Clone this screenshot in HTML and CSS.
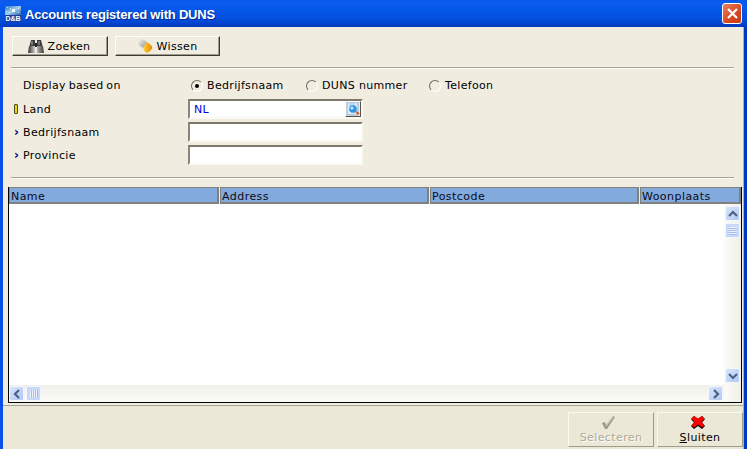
FILE: index.html
```html
<!DOCTYPE html>
<html lang="nl">
<head>
<meta charset="utf-8">
<title>Accounts registered with DUNS</title>
<link rel="stylesheet" href="styles.css">
</head>
<body>
<div class="window">
  <header class="titlebar">
    <svg class="app-icon" width="16" height="16" viewBox="0 0 16 16">
      <defs><linearGradient id="icoTop" x1="0" y1="0" x2="1" y2="1"><stop offset="0" stop-color="#2f6fc0"/><stop offset=".5" stop-color="#9fd0ee"/><stop offset="1" stop-color="#2e62b0"/></linearGradient></defs>
      <rect width="16" height="16" fill="#1c3f94"/>
      <rect width="16" height="9" fill="url(#icoTop)"/>
      <path d="M2 1h1v1H2zM5 2h1v1H5zM1 5h1v1H1zM4 6h1v1H4zM13 2h1v1h-1zM13 6h1v1h-1z" fill="#d8eefb"/>
      <rect x="7" y="3" width="3" height="3" fill="#eefaff"/>
      <text x="8" y="15" class="app-icon-text" text-anchor="middle">D&amp;B</text>
    </svg>
    <h1 class="title">Accounts registered with DUNS</h1>
    <button class="close" aria-label="Sluiten">
      <svg width="13" height="13" viewBox="0 0 13 13"><path d="M2 2l9 9M11 2l-9 9" stroke="#fff" stroke-width="2.2" fill="none"/></svg>
    </button>
  </header>
  <main class="client">
    <div class="toolbar">
      <button class="tool tool-zoek">
        <svg width="16" height="13" viewBox="0 0 16 13">
          <defs><linearGradient id="bino" x1="0" x2="1" y1="0" y2="0"><stop offset="0" stop-color="#2e2e2e"/><stop offset=".45" stop-color="#d4d4d4"/><stop offset="1" stop-color="#3a3a3a"/></linearGradient></defs>
          <path d="M3 0h4v5l-0 3H1l1-4zM9 0h4l1 4 1 4H9V5z" fill="#3c3c3c"/>
          <rect x="7" y="3" width="2" height="4" fill="#222"/>
          <path d="M1 6h6v7H0zM9 6h6l1 7H9z" fill="url(#bino)"/>
          <path d="M4 1v4M11 1v4" stroke="#a8a8a8"/>
        </svg>
        <span>Zoeken</span>
      </button>
      <button class="tool tool-wis">
        <svg width="15" height="14" viewBox="0 0 15 14">
          <defs>
            <linearGradient id="pillG" x1="0" y1="0" x2="1" y2="1"><stop offset="0" stop-color="#f4f4f4"/><stop offset="1" stop-color="#8e8e8e"/></linearGradient>
            <linearGradient id="pillO" x1="0" y1="0" x2="1" y2="0"><stop offset="0" stop-color="#ffd23a"/><stop offset="1" stop-color="#e88a08"/></linearGradient>
          </defs>
          <path d="M1 2a3.6 3.6 0 0 1 5-1l3 2-4 6-3-2a3.6 3.6 0 0 1-1-5z" fill="url(#pillG)"/>
          <path d="M9 3l4 3a3.6 3.6 0 0 1 0 5l-1 1a3.6 3.6 0 0 1-5 1L5 9z" fill="url(#pillO)"/>
        </svg>
        <span>Wissen</span>
      </button>
    </div>
    <hr class="rule rule-top">
    <form class="form">
      <div class="display-row">
        <span class="label label-display">Display based on</span>
        <div class="radios">
          <label class="radio radio-a"><i class="dot on"></i>Bedrijfsnaam</label>
          <label class="radio radio-b"><i class="dot"></i>DUNS nummer</label>
          <label class="radio radio-c"><i class="dot"></i>Telefoon</label>
        </div>
      </div>
      <div class="field-row">
        <span class="marker"><i class="req"></i></span>
        <span class="label">Land</span>
        <div class="input"><span class="value">NL</span>
          <span class="lookup">
            <svg width="14" height="14" viewBox="0 0 14 14">
              <rect x="1" y="0" width="11" height="13" fill="#dcebf8" stroke="#8fb0d2"/>
              <path d="M3 2h6M3 4h3" stroke="#9cc0e0"/>
              <circle cx="7" cy="7" r="3.800" fill="#2a96ec"/>
              <circle cx="6" cy="6" r="1.600" fill="#c4e8ff"/>
              <path d="M10 10l3 2" stroke="#d9541a" stroke-width="2"/>
            </svg>
          </span>
        </div>
      </div>
      <div class="field-row">
        <span class="marker"><i class="chev">›</i></span>
        <span class="label">Bedrijfsnaam</span>
        <div class="input"></div>
      </div>
      <div class="field-row">
        <span class="marker"><i class="chev">›</i></span>
        <span class="label">Provincie</span>
        <div class="input"></div>
      </div>
    </form>
    <hr class="rule rule-mid">
    <section class="grid">
      <div class="grid-head">
        <div class="col col-name">Name</div>
        <div class="col col-addr">Address</div>
        <div class="col col-post">Postcode</div>
        <div class="col col-city">Woonplaats</div>
      </div>
      <div class="grid-body">
        <div class="grid-main">
          <div class="cells"></div>
          <div class="hbar">
            <span class="sb sb-btn"><svg width="10" height="10" viewBox="0 0 10 10"><path d="M7 1L3 5l4 4" stroke="#4d6185" stroke-width="2.2" fill="none"/></svg></span>
            <span class="sb sb-thumb-h"></span>
            <span class="sb-spacer"></span>
            <span class="sb sb-btn"><svg width="10" height="10" viewBox="0 0 10 10"><path d="M3 1l4 4-4 4" stroke="#4d6185" stroke-width="2.2" fill="none"/></svg></span>
          </div>
        </div>
        <div class="vbar">
          <span class="sb sb-btn"><svg width="10" height="10" viewBox="0 0 10 10"><path d="M1 7l4-4 4 4" stroke="#4d6185" stroke-width="2.2" fill="none"/></svg></span>
          <span class="sb sb-thumb-v"></span>
          <span class="sb-spacer"></span>
          <span class="sb sb-btn"><svg width="10" height="10" viewBox="0 0 10 10"><path d="M1 3l4 4 4-4" stroke="#4d6185" stroke-width="2.2" fill="none"/></svg></span>
        </div>
      </div>
    </section>
    <footer class="footer">
      <button class="action" disabled>
        <svg width="13" height="13" viewBox="0 0 13 13"><path d="M0 7l3-1 1 3 7-9 2 1-8 12H3z" fill="#9c9a8e"/><path d="M4 10l7-9" stroke="#dedbcf"/></svg>
        <span>Selecteren</span>
      </button>
      <button class="action">
        <svg width="14" height="13" viewBox="0 0 14 13"><path d="M3 0l4 3 4-3 3 3-3 3.500 3 3.500-3 3-4-3-4 3-3-3 3-3.500-3-3.500z" fill="#000"/><path d="M3 0l4 2.500L11 0l2.500 2.500L10.500 6l3 3.500-2.500 2-4-3-4 3-2.500-2 3-3.500-3-3.500z" fill="#f00"/></svg>
        <span><u>S</u>luiten</span>
      </button>
    </footer>
  </main>
</div>
</body>
</html>
```
FILE: styles.css
```css
* { box-sizing: border-box; }
html, body { margin: 0; padding: 0; height: 100%; overflow: hidden; }
body { font: 11px "DejaVu Sans", Verdana, sans-serif; color: #000; background: #ece9d8; }

.window { width: 747px; height: 449px; display: flex; flex-direction: column; background: linear-gradient(90deg, #0a50e8 0, #0a50e8 3px, #0038c0 3px, #0038c0 100%); }

.titlebar {
  height: 27px; flex: none; display: flex; align-items: center; padding: 0 5px 0 5px;
  background: linear-gradient(#0a58e6 0, #0a5cf0 3px, #0558ea 8px, #0450de 18px, #0348d4 22px, #0038b8 27px);
}
.app-icon { flex: none; margin-top: 1px; }
.app-icon-text { font: bold 7px "Liberation Sans", sans-serif; fill: #fff; }
.title {
  margin: 1px 0 0 4px; flex: 1; font: bold 13px "Liberation Sans", Arial, sans-serif; letter-spacing: -.2px;
  color: #fff; text-shadow: 1px 1px 0 #0a2a8a;
}
.close {
  width: 20px; height: 21px; padding: 0; display: flex; align-items: center; justify-content: center;
  border: 1px solid #fff; border-radius: 3px; background: linear-gradient(135deg, #e8825f, #d8481f 60%, #c23a14);
}

.client {
  flex: 1; min-height: 0; margin: 0 3px 0 3px; background: #f0ede0; display: flex; flex-direction: column;
  border-right: 1px solid #b4b0a0;
}

.toolbar { display: flex; gap: 7px; padding: 9px 0 0 9px; }
.tool {
  height: 20px; padding: 0; display: flex; align-items: center; justify-content: center; gap: 4px;
  font: 11px "DejaVu Sans", sans-serif; letter-spacing: .35px; color: #000;
  background: #f0ede0; border: 1px solid; border-color: #fffef8 #3c3c34 #3c3c34 #fffef8; box-shadow: inset -1px -1px 0 #a09c8c;
}
.tool-zoek { width: 96px; padding-right: 2px; }
.tool-wis { width: 105px; }

.rule { margin: 0; height: 2px; border: 0; border-top: 1px solid #a8a498; border-bottom: 1px solid #fffef8; flex: none; }
.rule-top { margin: 11px 9px 0 8px; }
.rule-mid { margin: 9px 9px 0 8px; }

.form { display: flex; flex-direction: column; padding: 8px 0 0 0; }
.label { letter-spacing: .33px; }
.label-display { word-spacing: -1px; }
.display-row { display: flex; align-items: center; height: 17px; padding-left: 20px; margin-bottom: 5px; }
.display-row .label { width: 168px; }
.radios { display: flex; }
.radio { display: flex; align-items: center; gap: 4px; letter-spacing: .33px; }
.radio-a { width: 115px; }
.radio-b { width: 123px; }
.dot {
  width: 12px; height: 12px; border-radius: 50%; background: #f0ede0; position: relative;
  border: 1px solid; border-color: #6c6a60 #fff #fff #6c6a60;
}
.dot.on::after { content: ""; position: absolute; left: 3px; top: 3px; width: 4px; height: 4px; border-radius: 50%; background: #000; }

.field-row { display: flex; align-items: center; height: 20px; margin-bottom: 3px; }
.marker { width: 20px; padding-left: 10px; display: flex; align-items: center; flex: none; }
.req { width: 4px; height: 10px; background: #e6d800; border: 1px solid #4a4a20; margin-left: 1px; border-radius: 1px; }
.chev { font: bold 12px "DejaVu Sans", sans-serif; color: #00008b; margin-left: 1px; }
.field-row .label { width: 165px; flex: none; }
.input {
  width: 175px; height: 20px; display: flex; align-items: center; background: #fff; position: relative; padding-left: 4px;
  border: 2px solid #fbfaf2; border-top-color: #7c786a; border-left-color: #8a8678;
}
.value { color: #0000e0; flex: 1; letter-spacing: .3px; }
.lookup {
  width: 16px; height: 16px; display: flex; align-items: center; justify-content: center; background: #f0ede0;
  border: 1px solid; border-color: #fff #55534a #55534a #fff;
}

.grid { margin: 8px 1px 0 5px; height: 216px; flex: none; display: flex; flex-direction: column; border: 0 solid #000; border-width: 0 1px 1px 1px; }
.grid-head { display: flex; height: 17px; flex: none; margin: 0; }
.col {
  height: 17px; background: #82aadc; border: 1px solid #80807c; border-width: 1px 2px 2px 1px; padding-left: 1px; line-height: 17px; letter-spacing: .45px; color: #0a0a1c;
  flex: none; margin-right: 1px;
}
.col-name { width: 210px; }
.col-addr { width: 209px; }
.col-post { width: 209px; }
.col-city { flex: 1; margin-right: 0; }
.grid-body { flex: 1; min-height: 0; display: flex; background: #fff; }
.grid-main { flex: 1; display: flex; flex-direction: column; min-width: 0; }
.cells { flex: 1; }
.hbar { height: 17px; flex: none; display: flex; background: linear-gradient(#f0efe8, #fbfbf8); padding: 1px 1px 0 0; }
.vbar { width: 17px; flex: none; display: flex; flex-direction: column; background: linear-gradient(90deg, #fbfbf8, #f0efe8); padding: 2px 1px 19px 1px; }
.sb-spacer { flex: 1; }
.sb {
  flex: none; display: flex; align-items: center; justify-content: center; border: 1px solid #f4f6fb; border-radius: 2px;
  background: linear-gradient(135deg, #d8e4fb, #b2c8f4);
}
.sb-btn { width: 15px; height: 15px; }
.sb-thumb-h { width: 15px; height: 15px; margin-left: 2px; background-image: repeating-linear-gradient(90deg, #eef3fe 0 1px, #a6bbec 1px 2px); background-size: 8px 8px; background-position: center; background-repeat: no-repeat; background-color: #c8d8f8; }
.sb-thumb-v { width: 15px; height: 15px; margin-top: 2px; background-image: repeating-linear-gradient(#eef3fe 0 1px, #a6bbec 1px 2px); background-size: 8px 8px; background-position: center; background-repeat: no-repeat; background-color: #c8d8f8; }

.footer { flex: 1; min-height: 0; margin-top: 2px; padding: 6px 0 0 0; display: flex; justify-content: flex-end; gap: 3px; background: #ebe8d8; border-top: 1px solid #a8a498; }
.action {
  width: 86px; height: 35px; padding: 3px 0 0; display: flex; flex-direction: column; align-items: center; justify-content: flex-start; gap: 2px;
  font: 11px "DejaVu Sans", sans-serif; letter-spacing: .4px; color: #000; background: #ebe8d8;
  border: 1px solid; border-color: #fbfaf2 #a09c8c #a09c8c #fbfaf2;
}
.action svg { margin-right: 5px; }
.action:disabled { color: #aca899; text-shadow: 1px 1px 0 #fff; }
```
